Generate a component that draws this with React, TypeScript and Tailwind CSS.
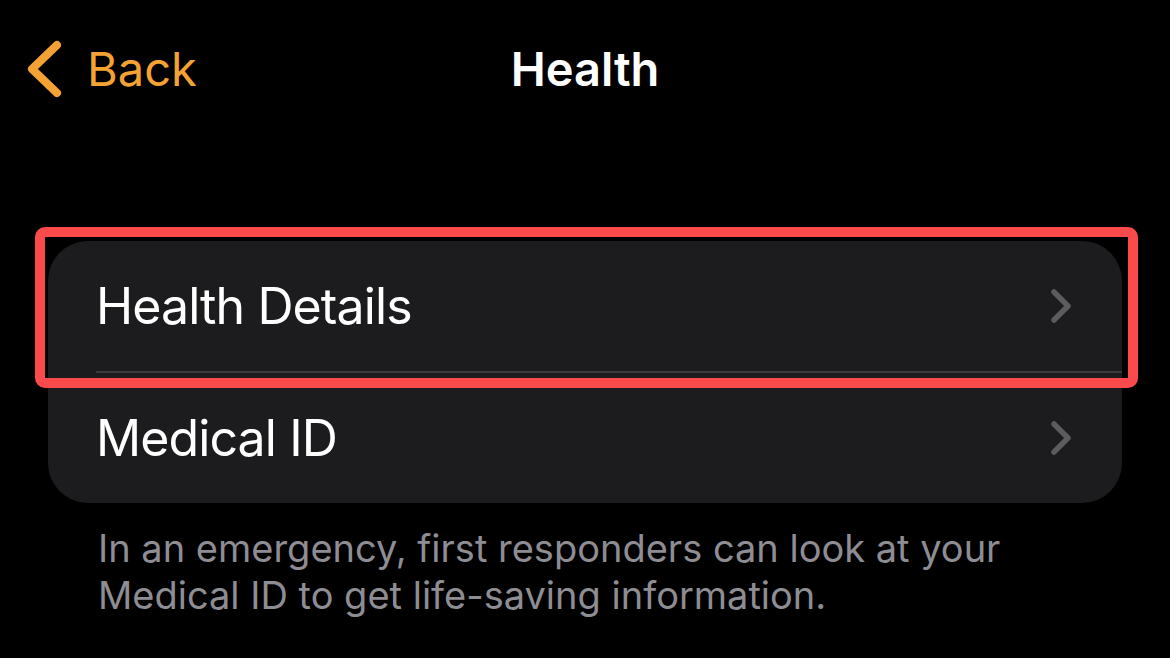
import React from "react";

const Chevron = () => (
  <svg width="30" height="44" viewBox="0 0 30 44" fill="none">
    <path d="M8 8 L22 22 L8 36" stroke="#5b5b60" strokeWidth="5.5" strokeLinecap="round" strokeLinejoin="round" />
  </svg>
);

export default function App() {
  return (
    <div className="relative h-[658px] w-[1170px] overflow-hidden bg-black" style={{ fontFamily: "Inter, 'Noto Sans', sans-serif" }}>
      {/* Nav bar */}
      <div className="relative grid grid-cols-[1fr_auto_1fr] items-center pt-[37px]">
        <div className="flex items-center pl-[24px]">
          <svg width="40" height="64" viewBox="0 0 40 64" fill="none">
            <path d="M33 8 L8 32 L33 56" stroke="#f4a233" strokeWidth="8" strokeLinecap="round" strokeLinejoin="round" />
          </svg>
          <span className="ml-[23px] text-[47px] leading-[48px] text-[#f4a233]">Back</span>
        </div>
        <div className="text-[47px] font-semibold leading-[48px] text-white">Health</div>
        <div />
      </div>

      {/* Card */}
      <div className="mx-[48px] mt-[140px] overflow-hidden rounded-[40px] bg-[#1c1c1e]">
        <div className="flex h-[130px] items-center justify-between pl-[48px] pr-[46px]">
          <span className="text-[50px] leading-[52px] tracking-[-0.9px] text-white">Health Details</span>
          <Chevron />
        </div>
        <div className="ml-[48px] h-[1.5px] bg-[#3a3a3c]" />
        <div className="flex h-[130px] items-center justify-between pl-[48px] pr-[46px]">
          <span className="text-[50px] leading-[52px] tracking-[-0.9px] text-white">Medical ID</span>
          <Chevron />
        </div>
      </div>

      {/* Footer */}
      <p className="ml-[98px] mt-[22px] w-[960px] text-[38px] leading-[47px] text-[#8d8d93]">
        In an emergency, first responders can look at your Medical ID to get life-saving information.
      </p>

      {/* Highlight overlay */}
      <div className="absolute left-[35px] top-[227px] h-[161px] w-[1103px] rounded-[10px] border-[10px] border-[#fb4a4c]" />
    </div>
  );
}
